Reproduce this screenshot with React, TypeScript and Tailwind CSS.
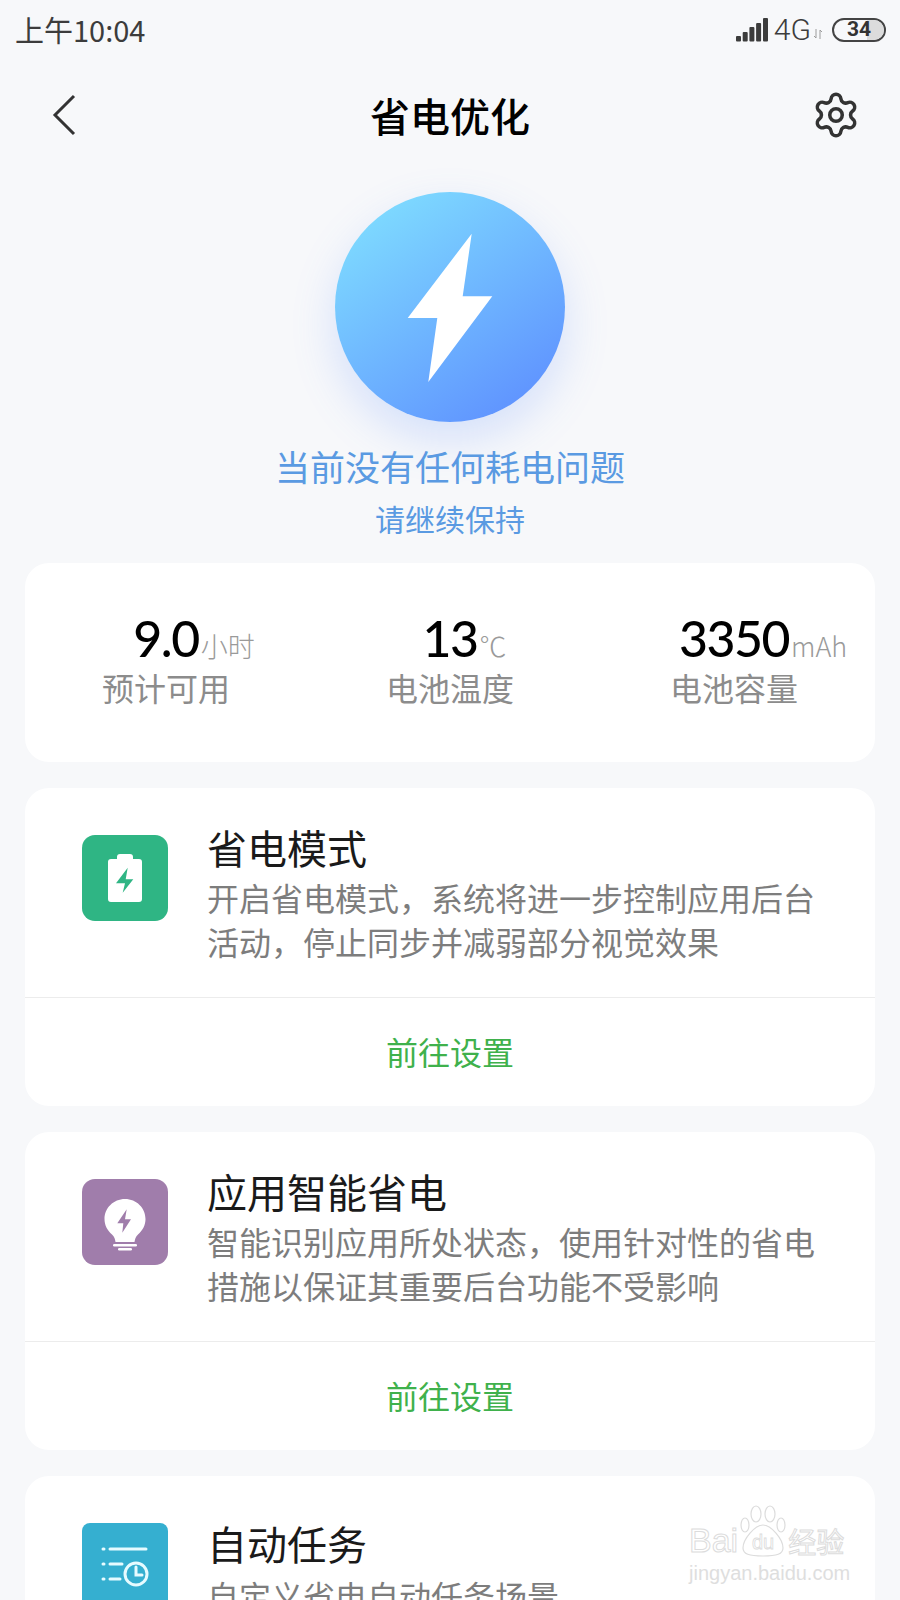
import React from 'react';
import { Settings } from 'lucide-react';

const cjk = "font-['Noto_Sans_CJK_SC','Noto_Sans',sans-serif]";

const BatteryIcon = () => (
  <svg width="86" height="86" viewBox="0 0 86 86" className="block">
    <rect width="86" height="86" rx="13" fill="#2fb584" />
    <path d="M35 22a3 3 0 0 1 3-3h10a3 3 0 0 1 3 3v2h6a3 3 0 0 1 3 3v37a3 3 0 0 1-3 3H29a3 3 0 0 1-3-3V27a3 3 0 0 1 3-3h6z" fill="#fff" />
    <polygon points="45.7,32.7 43.7,44.3 51.3,44.3 40.7,57.7 43,48.3 34,48.3" fill="#2fb584" />
  </svg>
);

const BulbIcon = () => (
  <svg width="86" height="86" viewBox="0 0 86 86" className="block">
    <rect width="86" height="86" rx="13" fill="#a07dab" />
    <path d="M43 20c-11.500 0-20.500 9-20.500 20 0 6.500 3 11.500 7.500 15.500 2.500 2.300 3 4.500 3.500 7.500h19c.5-3 1-5.200 3.500-7.500 4.500-4 7.500-9 7.500-15.500 0-11-9-20-20.500-20z" fill="#fff" />
    <rect x="31" y="65" width="24" height="2.500" rx="1.200" fill="#fff" />
    <rect x="36" y="69" width="14" height="2.500" rx="1.200" fill="#fff" />
    <polygon points="44.700,30.300 43,40.300 49,40.300 40.300,53.700 41.300,44.300 35.300,44.300" fill="#a07dab" />
  </svg>
);

const TaskIcon = () => (
  <svg width="86" height="86" viewBox="0 0 86 86" className="block">
    <rect width="86" height="86" rx="8" fill="#35afd0" />
    <g stroke="#e6fbff" strokeWidth="3" fill="none" strokeLinecap="round">
      <path d="M21 26h1M28 26h36M21 41h1M28 41h12M21 56h1M28 56h10" />
      <circle cx="54" cy="51" r="11" />
      <path d="M54 44v8h6" />
    </g>
  </svg>
);

const Stat = ({ value, unit, label }: { value: string; unit: string; label: string }) => (
  <div className="flex flex-col items-center w-[200px]">
    <div className="relative h-[56px] leading-[56px] text-[50px] font-medium tracking-[-1.5px] text-black font-['Lato','Noto_Sans',sans-serif]">
      {value}
      <span className={`absolute left-full bottom-0 ml-[2px] leading-[40px] text-[27px] tracking-normal text-[#9a9a9a] font-light whitespace-nowrap ${cjk}`}>{unit}</span>
    </div>
    <div className="mt-[-1px] h-[44px] leading-[44px] text-[32px] text-[#8c8c8c]">{label}</div>
  </div>
);

const FeatureCard = ({ icon, title, lines, action }: { icon: React.ReactNode; title: string; lines: string[]; action?: boolean }) => (
  <div className="bg-white rounded-[24px] shrink-0">
    <div className="flex pt-[34px] pl-[57px] pb-[34px]">
      <div className="mt-[13px] mr-[39px] shrink-0">{icon}</div>
      {/* a one-line description sits lower, the block is centred on the icon */}
      <div className={lines.length === 1 ? 'mt-[8px]' : ''}>
        <div className="h-[50px] leading-[50px] text-[40px] text-[#1a1a1a]">{title}</div>
        <div className={`${lines.length === 1 ? 'mt-[5px]' : 'mt-[3px]'} text-[32px] leading-[44px] text-[#7d7d7d] whitespace-nowrap`}>
          {lines.map((l) => <div key={l}>{l}</div>)}
        </div>
      </div>
    </div>
    {action && (
      <>
        <div className="h-px bg-[#ececec]" />
        <div className="h-[108px] pb-[2px] flex items-center justify-center text-[32px] text-[#3fb14c]">前往设置</div>
      </>
    )}
  </div>
);

export default function App() {
  return (
    <div className={`relative w-[900px] h-[1600px] overflow-hidden bg-[#f7f8fa] ${cjk}`}>
      {/* status bar */}
      <div className="h-[62px] pb-[3px] flex items-center justify-between pl-[15px] pr-[14px] text-[#3c3c3c]">
        <div className="text-[29px]">上午10:04</div>
        <div className="flex items-center">
          <svg width="32" height="24" viewBox="0 0 32 24" className="block">
            <g fill="#3c3c3c">
              <rect x="0" y="18" width="5" height="5.500" rx="1" />
              <rect x="6.700" y="14" width="5" height="9.500" rx="1" />
              <rect x="13.400" y="9" width="5" height="14.500" rx="1" />
              <rect x="20.100" y="5" width="5" height="18.500" rx="1" />
              <rect x="27" y="0" width="5" height="23.500" rx="1" />
            </g>
          </svg>
          <span className="ml-[6px] text-[30px] leading-none font-light font-['Roboto',sans-serif]">4G</span>
          <svg width="8" height="10" viewBox="0 0 8 10" className="block ml-[3px] mt-[8px]">
            <path d="M2 0v9M0 7l2 2M6 10V1M8 3L6 1" stroke="#9c9c9c" strokeWidth="1" fill="none" />
          </svg>
          <div className="relative ml-[10px] w-[54px] h-[24px] rounded-full border-[2.5px] border-[#444] overflow-hidden flex items-center justify-center">
            <div className="absolute right-0 top-0 bottom-0 w-[17px] bg-[#dcdcdc]" />
            <span className="relative text-[21px] leading-none font-bold text-[#333] font-['Roboto',sans-serif]">34</span>
          </div>
        </div>
      </div>

      {/* title bar */}
      <div className="mt-[15px] h-[76px] grid grid-cols-[1fr_auto_1fr] items-center px-[39px]">
        <svg width="24" height="42" viewBox="0 0 24 42" className="block ml-[13px]">
          <polyline points="22,2 3,21 22,40" fill="none" stroke="#333" strokeWidth="3" />
        </svg>
        <div className="text-[40px] font-medium text-black">省电优化</div>
        <div className="justify-self-end">
          <Settings size={50} strokeWidth={1.7} color="#333" />
        </div>
      </div>

      {/* hero */}
      <div className="mt-[39px] flex flex-col items-center">
        <div className="w-[230px] h-[230px] rounded-full bg-[linear-gradient(145deg,#80dfff_6%,#5e90ff_92%)] shadow-[0_18px_44px_rgba(90,140,255,0.22)]">
          <svg width="230" height="230" viewBox="0 0 230 230" className="block">
            <polygon points="136.700,41.700 127.700,104.300 157.300,104.300 93.300,190 102.300,126 72.700,126" fill="#fff" />
          </svg>
        </div>
        <div className="mt-[20px] h-[48px] leading-[48px] text-[35px] text-[#5a9ae2]">当前没有任何耗电问题</div>
        <div className="mt-[8px] h-[40px] leading-[40px] text-[30px] text-[#5a9ae2]">请继续保持</div>
      </div>

      {/* cards */}
      <div className="mt-[25px] mx-[25px] flex flex-col gap-[26px]">
        <div className="bg-white rounded-[24px] h-[199px] pt-[47px] flex justify-between px-[41px]">
          <Stat value="9.0" unit="小时" label="预计可用" />
          <Stat value="13" unit="℃" label="电池温度" />
          <Stat value="3350" unit="mAh" label="电池容量" />
        </div>
        <FeatureCard
          icon={<BatteryIcon />}
          title="省电模式"
          lines={['开启省电模式，系统将进一步控制应用后台', '活动，停止同步并减弱部分视觉效果']}
          action
        />
        <FeatureCard
          icon={<BulbIcon />}
          title="应用智能省电"
          lines={['智能识别应用所处状态，使用针对性的省电', '措施以保证其重要后台功能不受影响']}
          action
        />
        <FeatureCard icon={<TaskIcon />} title="自动任务" lines={['自定义省电自动任务场景']} />
      </div>

      {/* watermark */}
      <div className="absolute left-[689px] top-[1505px] w-[165px] text-[#d8d8d8]">
        <div className="flex items-end h-[52px]">
          <span className="text-[34px] leading-[34px] text-transparent [-webkit-text-stroke:1px_#dcdcdc] font-['Liberation_Sans',sans-serif]">Bai</span>
          <svg width="50" height="52" viewBox="0 0 50 52" className="block">
            <g fill="none" stroke="#dcdcdc" strokeWidth="1.200">
              <ellipse cx="18" cy="9" rx="5" ry="8" />
              <ellipse cx="32" cy="9" rx="5" ry="8" />
              <ellipse cx="7" cy="20" rx="4" ry="7" />
              <ellipse cx="43" cy="20" rx="4" ry="7" />
              <path d="M25 20c-8 0-20 14-20 23 0 6 6 8 20 8s20-2 20-8c0-9-12-23-20-23z" />
            </g>
            <text x="25" y="44" textAnchor="middle" fontSize="20" fill="none" stroke="#dcdcdc" strokeWidth="0.800" fontFamily="Liberation Sans">du</text>
          </svg>
          <span className="text-[28px] leading-[32px] text-transparent [-webkit-text-stroke:1px_#dcdcdc]">经验</span>
        </div>
        <div className="mt-[4px] text-[20px] leading-[24px] whitespace-nowrap text-[#dedede] font-['Liberation_Sans',sans-serif]">jingyan.baidu.com</div>
      </div>
    </div>
  );
}
